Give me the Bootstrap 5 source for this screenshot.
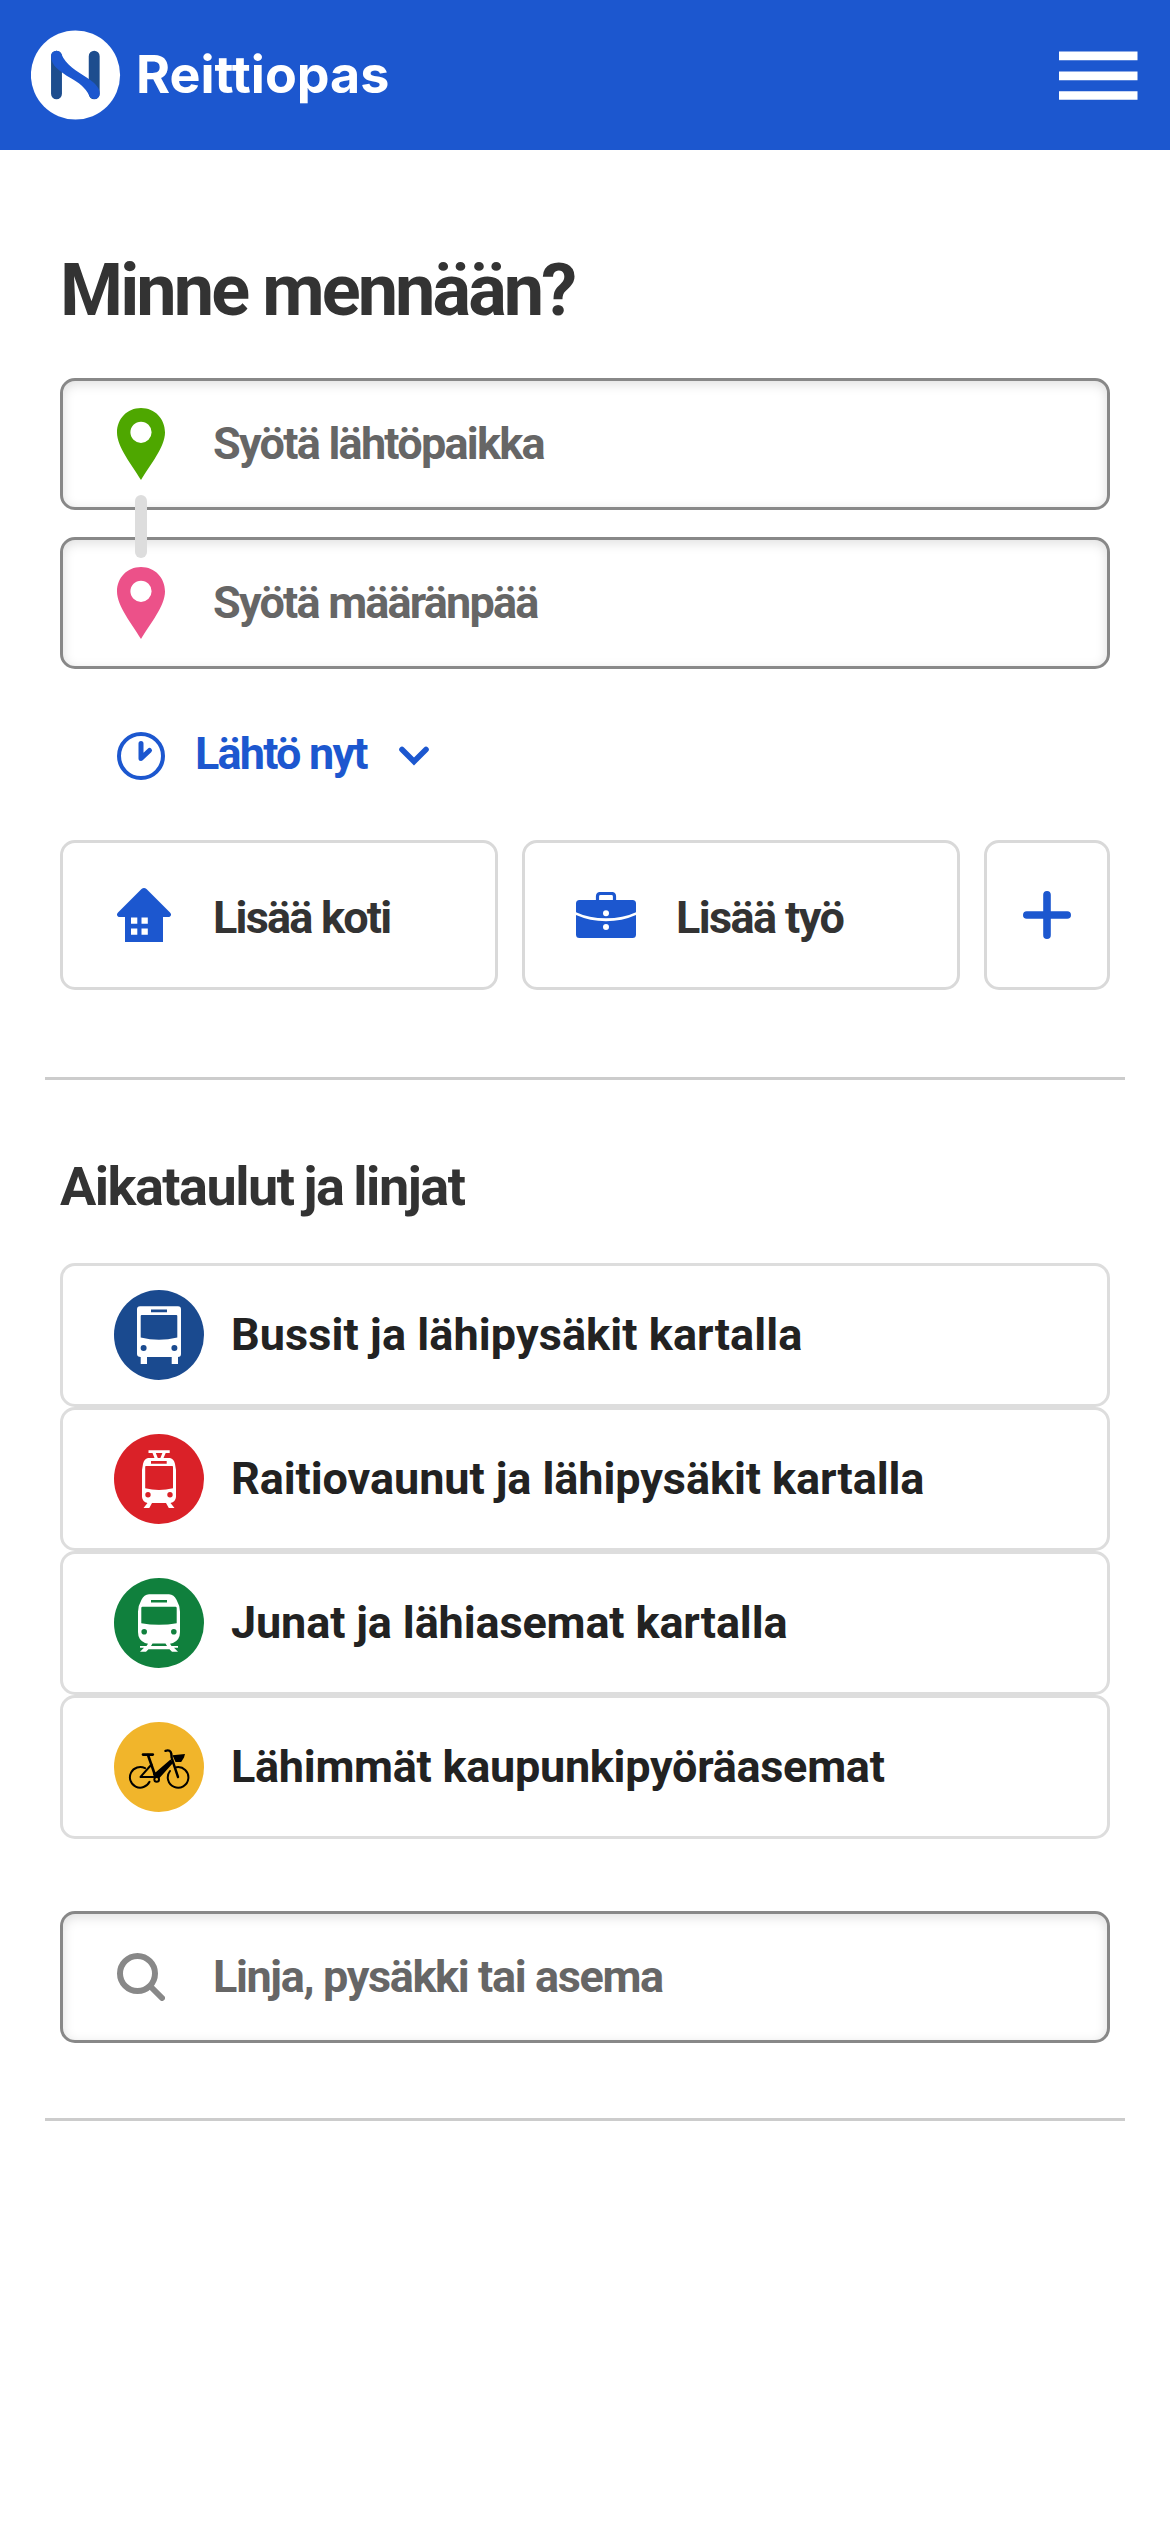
<!DOCTYPE html>
<html lang="fi">
<head>
<meta charset="utf-8">
<meta name="viewport" content="width=device-width, initial-scale=1">
<title>Reittiopas</title>
<link href="https://cdn.jsdelivr.net/npm/bootstrap@5.3.0/dist/css/bootstrap.min.css" rel="stylesheet">
<style>
  body { font-family: Roboto, "Liberation Sans", sans-serif; font-weight: 700; font-size: 45px; line-height: 54px; color: #333; background: #fff; }
  svg { display: block; flex: none; }
  .topbar { height: 150px; background: #1c57cf; padding: 0 32px 0 31px; }
  .brand-name { font-family: Inter, Roboto, sans-serif; font-size: 52px; line-height: 60px; color: #fff; letter-spacing: 0; margin-left: 15px; }
  .section-block { margin: 0 45px; padding: 0 15px; border-bottom: 3px solid #ccc; }
  .plan { padding-bottom: 87px; }
  .browse { padding-bottom: 75px; }
  .main-title { font-size: 72px; line-height: 84px; letter-spacing: -2.9px; padding-top: 99px; margin: 0 0 45px; }
  .sub-title { font-size: 54px; line-height: 64px; letter-spacing: -1.5px; word-spacing: -2px; margin: 75px 0 44px; }
  .tight { letter-spacing: -1.8px; }
  .field-stack { gap: 27px; }
  .field { height: 132px; border: 3px solid #888; border-radius: 15px; box-shadow: inset 0 3px 12px rgba(0,0,0,.13); color: #666; padding-left: 54px; }
  .field .tight { margin-left: 48px; }
  .from-text { letter-spacing: -1.75px; }
  .search-field { margin-top: 72px; }
  .search-text { letter-spacing: -1.37px; }
  .link-bar { width: 12px; height: 63px; border-radius: 6px; background: #ddd; left: 75px; top: 117px; }
  .when { color: #1c57cf; padding-left: 57px; margin-top: 60px; height: 54px; }
  .when .tight { margin-left: 30px; padding-bottom: 5px; }
  .chev { margin-left: 32px; }
  .places { gap: 24px; margin-top: 57px; }
  .place { height: 150px; border: 3px solid #d9d9d9; border-radius: 15px; padding-left: 54px; }
  .place-wide { width: 438px; }
  .place .tight { margin-left: 42px; padding-top: 5px; }
  .work { padding-left: 51px; }
  .place .work-text { margin-left: 40px; letter-spacing: -1.6px; }
  .mode { height: 144px; border: 3px solid #ddd; border-radius: 15px; padding-left: 51px; color: #222; letter-spacing: .09px; }
  .mode span { margin-left: 27px; }
  .tram { letter-spacing: -.07px; }
  .train { letter-spacing: -.13px; }
  .bike { letter-spacing: -.28px; }
</style>
</head>
<body>
<header class="topbar d-flex align-items-center">
  <svg width="90" height="90" viewBox="0 0 90 90">
    <circle cx="44.5" cy="45" r="44.6" fill="#fff"/>
    <path d="M25.500 26.200V63.800M63.200 26.200V63.800" stroke="#1d4d8e" stroke-width="10.900" stroke-linecap="round"/>
    <path d="M20.100 26.200a5.400 5.400 0 0 1 10.200-2.500C34.500 35 46 41 56 47.800c7 4.500 12.700 9.200 12.700 16a5.400 5.400 0 0 1-10.200 2.300C54 57 48 53 40 48.300 28 41 20.100 35.500 20.100 26.200z" fill="#1c57cf"/>
  </svg>
  <span class="brand-name">Reittiopas</span>
  <svg class="ms-auto" width="79" height="49" viewBox="0 0 79 49"><path d="M0 .6h78.500v8.700H0zM0 20.500h78.500v8.700H0zM0 40.200h78.500v8.600H0z" fill="#fff"/></svg>
</header>

<main>
  <section class="section-block plan">
    <h1 class="main-title fw-bold">Minne mennään?</h1>
    <div class="field-stack position-relative d-flex flex-column">
      <div class="field d-flex align-items-center">
        <svg width="48" height="72" viewBox="0 0 48 72"><path fill-rule="evenodd" d="M24 0C38 0 48 11 48 24.500 48 39 33 57 24 72 15 57 0 39 0 24.500 0 11 10 0 24 0zm0 13.700a10.600 10.600 0 1 0 0 21.200 10.600 10.600 0 0 0 0-21.200z" fill="#4ea700"/></svg>
        <span class="tight from-text">Syötä lähtöpaikka</span>
      </div>
      <div class="field d-flex align-items-center">
        <svg width="48" height="72" viewBox="0 0 48 72"><path fill-rule="evenodd" d="M24 0C38 0 48 11 48 24.500 48 39 33 57 24 72 15 57 0 39 0 24.500 0 11 10 0 24 0zm0 13.700a10.600 10.600 0 1 0 0 21.200 10.600 10.600 0 0 0 0-21.200z" fill="#ec5189"/></svg>
        <span class="tight">Syötä määränpää</span>
      </div>
      <div class="link-bar position-absolute"></div>
    </div>

    <div class="when d-flex align-items-center">
      <svg width="48" height="48" viewBox="0 0 48 48" fill="none" stroke="#1c57cf" stroke-linecap="round" stroke-linejoin="round"><circle cx="24" cy="24" r="22" stroke-width="4"/><path d="M24 11.500V26.500l8.500-8" stroke-width="5"/></svg>
      <span class="tight">Lähtö nyt</span>
      <svg class="chev" width="30" height="20" viewBox="0 0 30 20"><path d="M3 3.500 15 15.500 27 3.500" fill="none" stroke="#1c57cf" stroke-width="5.600" stroke-linecap="round"/></svg>
    </div>

    <div class="places d-flex">
      <div class="place place-wide d-flex align-items-center">
        <svg width="54" height="54" viewBox="0 0 54 54"><path fill-rule="evenodd" d="M24.500 1q2.500-2 5 0L53 24.500c2.200 2.300.5 4.500-2 4.500H46V54H8V29H3C.5 29-1.200 26.800 1 24.500zM14 29.500v6.300h6.300v-6.300zm10.500 0v6.300h6.300v-6.300zM14 40.500v6.300h6.300v-6.300zm10.500 0v6.300h6.300v-6.300z" fill="#1c57cf"/></svg>
        <span class="tight">Lisää koti</span>
      </div>
      <div class="place place-wide work d-flex align-items-center">
        <svg width="60" height="46" viewBox="0 0 60 46" fill="#1c57cf"><path d="M21.500 9V4.500q0-3 3-3h11q3 0 3 3V9" fill="none" stroke="#1c57cf" stroke-width="3.200"/><path fill-rule="evenodd" d="M3.500 8h53q3.500 0 3.500 3.500v8.700Q47 26.300 30 26.300T0 20.200v-8.700Q0 8 3.500 8zM30 18.200a3 3 0 1 0 0 6 3 3 0 0 0 0-6z"/><path fill-rule="evenodd" d="M0 23Q14 29.200 30 29.200T60 23V42.500q0 3.500-3.500 3.500h-53Q0 46 0 42.500zM30 32a3 3 0 1 0 0 6 3 3 0 0 0 0-6z"/></svg>
        <span class="tight work-text">Lisää työ</span>
      </div>
      <div class="place d-flex align-items-center justify-content-center flex-fill p-0">
        <svg width="48" height="48" viewBox="0 0 48 48"><path d="M24 3.800V44.200M3.800 24H44.200" stroke="#1c57cf" stroke-width="7.600" stroke-linecap="round"/></svg>
      </div>
    </div>
  </section>

  <section class="section-block browse">
    <h2 class="sub-title fw-bold">Aikataulut ja linjat</h2>
    <div class="d-flex flex-column">
      <div class="mode d-flex align-items-center">
        <svg width="90" height="90" viewBox="0 0 90 90"><circle cx="45" cy="45" r="45" fill="#1a4a8f"/><path fill="#fff" d="M26 16.300h38q3 0 3 3V64q0 3-3 3v7h-6.300v-7H33v7h-6.300v-7Q23 67 23 64V19.300q0-3 3-3z"/><g fill="#1a4a8f"><path d="M37 19.500h16v2.700H37zM27.700 25h34.600q1 0 1 1v21.500Q54 49.800 45 49.800T26.700 47.500V26q0-1 1-1z"/><circle cx="29.600" cy="58" r="3"/><circle cx="60.400" cy="58" r="3"/></g></svg>
        <span>Bussit ja lähipysäkit kartalla</span>
      </div>
      <div class="mode tram d-flex align-items-center">
        <svg width="90" height="90" viewBox="0 0 90 90"><circle cx="45" cy="45" r="45" fill="#da2128"/><g fill="#fff"><path fill-rule="evenodd" d="M34.500 16.200h21.200V19h-4L49.500 24H56q4 1 5 6l1 6V63q-.5 5-5.500 6l4 5h-5.700L52 69H38l-2.700 5H29.500l4-5Q28.500 68 28 63V36l1-6q1-5 5-6h6.500L38.500 19h-4zm7.300 2.800 2 5h2.600l2-5z"/></g><g fill="#da2128"><path d="M37 27h15.700v2.700H37zM32 32h26.200q.8 0 .8.800V54.300Q52 56 45 56t-13.800-1.700V32.800q0-.8.800-.8z"/><circle cx="34" cy="60.700" r="2.700"/><circle cx="56" cy="60.700" r="2.700"/></g></svg>
        <span>Raitiovaunut ja lähipysäkit kartalla</span>
      </div>
      <div class="mode train d-flex align-items-center">
        <svg width="90" height="90" viewBox="0 0 90 90"><circle cx="45" cy="45" r="45" fill="#10803d"/><path fill="#fff" d="M35 16.200h20q5 .3 7.500 5.500 3.500 6 3.500 12V54q0 8-7 11l-3 .7 1.500 2.300h6.500v1.700h-4l4 4h-6L55.500 71.300h-21L32 73.700h-6l4-4h-4V68h6.500L34 65.700 31 65q-7-3-7-11V33.700q0-6 3.500-12Q30 16.500 35 16.200z"/><g fill="#10803d"><path d="M37 22h16v2.500H37zM28.500 28.700h33q1.200 0 1.200 1.200V45.300Q54 46.800 45 46.800T27.300 45.300V29.900q0-1.200 1.200-1.200zM38.500 65.500h13L53 68H37z"/><circle cx="30.200" cy="53.800" r="2.800"/><circle cx="59.800" cy="53.800" r="2.800"/></g></svg>
        <span>Junat ja lähiasemat kartalla</span>
      </div>
      <div class="mode bike d-flex align-items-center">
        <svg width="90" height="90" viewBox="0 0 90 90"><circle cx="45" cy="45" r="45" fill="#f1b52b"/><g fill="none" stroke="#000" stroke-width="2" stroke-linecap="round" stroke-linejoin="round"><path d="M31 46.200a10.300 10.300 0 1 0 4.500 13.600M62.500 45.200a10.300 10.300 0 1 1-6.500 3.800"/><path d="M29 32.600h9.800" stroke-width="2.600"/><path d="M34 33l7.500 21.500" stroke-width="2.600"/><path d="M37.500 42.500 26.500 54.900h13" stroke-width="2"/><path d="M51.500 28.800q5-1.500 5.800 3l.4 4M58 37l6 18" stroke-width="2.400"/></g><path d="M38.800 51.500 42 50 56.500 37.500 59 41 45.500 56 40 54.500zM58.500 33.200 71 31.900l-1 3.600-2.800 4.600h-5.700z"/><circle cx="42.700" cy="57.400" r="3.300"/><circle cx="42.700" cy="57.400" r="1.300" fill="#f1b52b"/></svg>
        <span>Lähimmät kaupunkipyöräasemat</span>
      </div>
    </div>
    <div class="field search-field d-flex align-items-center">
      <svg width="48" height="48" viewBox="0 0 48 48" fill="none" stroke="#888" stroke-linecap="round"><circle cx="20.500" cy="20.500" r="17.500" stroke-width="6"/><path d="M33.500 33.500 45 45" stroke-width="6"/></svg>
      <span class="tight search-text">Linja, pysäkki tai asema</span>
    </div>
  </section>
</main>
</body>
</html>
